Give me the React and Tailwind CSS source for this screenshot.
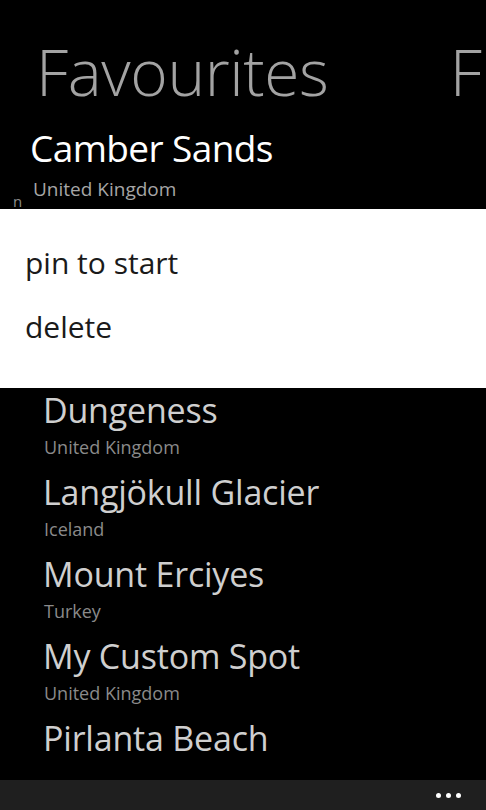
import React from "react";

const places = [
  { name: "Dungeness", country: "United Kingdom" },
  { name: "Langjökull Glacier", country: "Iceland" },
  { name: "Mount Erciyes", country: "Turkey" },
  { name: "My Custom Spot", country: "United Kingdom" },
  { name: "Pirlanta Beach", country: null },
];

function App() {
  return (
    <div
      className="w-[486px] h-[810px] bg-black flex flex-col overflow-hidden"
      style={{ fontFamily: '"Open Sans", "Noto Sans", sans-serif' }}
    >
      {/* pivot header */}
      <div className="flex pt-[40px] whitespace-nowrap">
        <span className="ml-[36px] text-[64px] leading-[64px] font-light text-[#a3a3a3] tracking-[-0.4px]">
          Favourites
        </span>
        <span className="ml-auto mr-[4px] text-[64px] leading-[64px] font-light text-[#a3a3a3]">
          F
        </span>
      </div>

      {/* selected item, lifted above the menu */}
      <div className="mt-[25px] ml-[30px] text-[37px] leading-[38px] text-white tracking-[-0.6px]">
        Camber Sands
      </div>
      <div className="relative mt-[13px] ml-[33px] text-[19px] leading-[18px] text-[#a6a6a6]">
        United Kingdom
        <span className="absolute left-[-20px] top-[14px] text-[15px] leading-[15px] text-[#8c8c8c]">
          n
        </span>
      </div>

      {/* context menu */}
      <div className="relative mt-[11px] h-[179px] bg-white pt-[38px] pl-[25px] text-[30px] leading-[32px] text-[#1a1a1a]">
        <div>pin to start</div>
        <div className="mt-[32px]">delete</div>
      </div>

      {/* list */}
      <div className="flex flex-col ml-[43px] pt-[5px]">
        {places.map((p) => (
          <div key={p.name} className="flex flex-col pb-[19px]">
            <div className="text-[34px] leading-[35px] text-[#cfcfcf] whitespace-nowrap tracking-[-0.2px]">
              {p.name}
            </div>
            {p.country && (
              <div className="mt-[11px] ml-[1px] text-[18px] leading-[17px] text-[#8a8a8a]">
                {p.country}
              </div>
            )}
          </div>
        ))}
      </div>

      {/* app bar */}
      <div className="mt-auto h-[30px] shrink-0 bg-[#1f1f1f] flex items-center justify-end pr-[25px] gap-[5px]">
        <span className="w-[5px] h-[5px] rounded-full bg-white" />
        <span className="w-[5px] h-[5px] rounded-full bg-white" />
        <span className="w-[5px] h-[5px] rounded-full bg-white" />
      </div>
    </div>
  );
}

export default App;
